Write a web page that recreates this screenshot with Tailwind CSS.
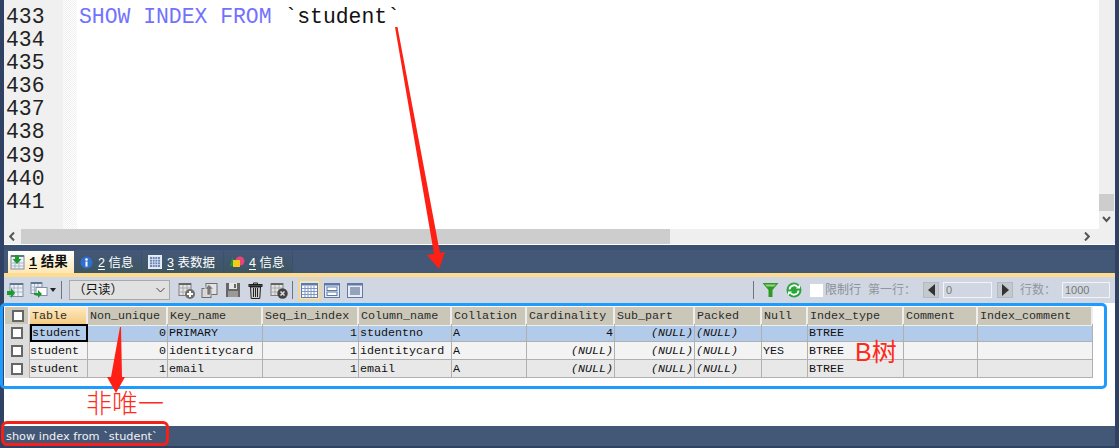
<!DOCTYPE html>
<html>
  <head>
    <meta charset="utf-8" />
    <title>SQLyog</title>
    <script src="https://cdn.jsdelivr.net/npm/@tailwindcss/browser@4"></script>
  </head>
  <body class="relative flex h-[448px] w-[1119px] flex-col overflow-hidden bg-[#2f4264] font-['Liberation_Sans','Noto_Sans_CJK_SC',sans-serif]">
    <!-- editor -->
    <div class="mx-[4px] flex h-[229px] shrink-0 bg-white">
      <div class="w-[59px] shrink-0 bg-[#f0f0f0] pl-[2px] pt-[6px] font-['Liberation_Mono',monospace] text-[21.4px] leading-[23.1px] text-[#222]">
        <div>433</div><div>434</div><div>435</div><div>436</div><div>437</div><div>438</div><div>439</div><div>440</div><div>441</div>
      </div>
      <div class="w-[14px] shrink-0 bg-[repeating-conic-gradient(#f0f0f0_0_25%,#ffffff_0_50%)] bg-[length:2px_2px]"></div>
      <div class="flex-1 pl-[2px] pt-[6px] font-['Liberation_Mono',monospace] text-[21.4px] leading-[23.1px] text-[#111]">
        <span class="text-[#7272ff]">SHOW INDEX FROM</span> `student`
      </div>
      <div class="flex w-[16px] shrink-0 flex-col bg-[#efefef]">
        <div class="mt-[194px] h-[17px] w-[15px] bg-[#cdcdcd]"></div>
        <svg class="mt-[5px] ml-[3px]" width="9" height="7" viewBox="0 0 9 7"><path d="M1 1l3.5 4L8 1" fill="none" stroke="#555" stroke-width="2" /></svg>
      </div>
    </div>
    <div class="mx-[4px] flex h-[15px] shrink-0 items-center bg-[#efefef]">
      <svg class="ml-[5px] mr-[6px]" width="6" height="9" viewBox="0 0 6 9"><path d="M5 .5L1.2 4.5 5 8.5" fill="none" stroke="#555" stroke-width="2" /></svg>
      <div class="h-full w-[649px] bg-[#cdcdcd]"></div>
      <svg class="ml-[414px]" width="6" height="9" viewBox="0 0 6 9"><path d="M1 .5l3.8 4L1 8.5" fill="none" stroke="#555" stroke-width="2" /></svg>
    </div>
    <div class="mx-[4px] h-[1px] shrink-0 bg-white"></div>

    <!-- result tabs -->
    <div class="mx-[4px] flex h-[28px] shrink-0 items-end border-t-[5px] border-b-0 border-[#3a4f72] bg-[#435877] text-[12.5px] text-white">
      <div class="ml-[4px] flex h-[22px] w-[66px] items-center gap-[4px] bg-gradient-to-b from-white to-[#fde6b0] pl-[2px] pt-[2px] text-[13.5px] font-bold text-[#111]">
        <svg class="-mt-[2px]" width="15" height="16" viewBox="0 0 15 16"><rect x="1" y="2" width="13" height="13" fill="#eef1f6" stroke="#7d8fa8" /><path d="M1 2h13" stroke="#5f7796" stroke-width="2" /><path d="M5 6v9M9 6v9M1 9h13M1 12h13" stroke="#a9b6c8" /><path d="M5 1h4v4h2.500L7 10 2.500 5H5z" fill="#1d9a2c" /></svg>
        <span><span class="font-['Liberation_Mono',monospace] underline underline-offset-2">1</span> 结果</span>
      </div>
      <div class="ml-[1px] flex h-[22px] w-[67px] items-center gap-[5px] border-r border-[#3a4f72] bg-gradient-to-b from-[#435877] to-[#3d5660] pl-[5px] pt-[2px]">
        <svg class="-mt-[2px]" width="13" height="13" viewBox="0 0 13 13"><circle cx="6.500" cy="6.500" r="6" fill="#2f6fd0" /><circle cx="6.500" cy="3.500" r="1.300" fill="#fff" /><rect x="5.500" y="5.500" width="2" height="5" fill="#fff" /></svg>
        <span><span class="underline underline-offset-2">2</span> 信息</span>
      </div>
      <div class="flex h-[22px] w-[82px] items-center gap-[5px] border-r border-[#3a4f72] bg-gradient-to-b from-[#435877] to-[#3d5660] pl-[6px] pt-[2px]">
        <svg class="-mt-[2px]" width="14" height="14" viewBox="0 0 14 14"><rect x=".5" y=".5" width="13" height="13" fill="#dfe6f2" stroke="#e8eef8" /><rect x="2" y="2" width="10" height="10" fill="#6d87b8" /><path d="M4.500 2v10M7 2v10M9.500 2v10M2 4.500h10M2 7h10M2 9.500h10" stroke="#dfe6f2" stroke-width=".7" /></svg>
        <span><span class="underline underline-offset-2">3</span> 表数据</span>
      </div>
      <div class="flex h-[22px] w-[69px] items-center gap-[4px] border-r border-[#3a4f72] bg-gradient-to-b from-[#435877] to-[#3d5660] pl-[5px] pt-[2px]">
        <svg class="-mt-[2px]" width="16" height="14" viewBox="0 0 16 14"><path d="M1 11L3.500 2 5 11z" fill="#18a13a" /><circle cx="11" cy="6" r="4.500" fill="#e8447a" /><rect x="4" y="5" width="7" height="7" fill="#f7c91d" /></svg>
        <span><span class="underline underline-offset-2">4</span> 信息</span>
      </div>
    </div>
    <div class="mx-[4px] h-[4px] shrink-0 bg-[#fddc92]"></div>

    <!-- toolbar -->
    <div class="mx-[4px] flex h-[26px] shrink-0 items-center bg-[#d0d7e2] text-[12px] text-[#8a8f98]">
      <svg class="ml-[3px]" width="17" height="17" viewBox="0 0 17 17"><rect x="3" y="1.500" width="13" height="13" fill="#eef1f6" stroke="#7d8fa8" /><path d="M3 2h13" stroke="#5f7796" stroke-width="2" /><path d="M7 3v11M11 3v11M3 6h13M3 10h13" stroke="#a9b6c8" /><path d="M0 9h4V6l4 5-4 5v-3H0z" fill="#1d9a2c" /></svg>
      <svg class="ml-[6px]" width="18" height="18" viewBox="0 0 18 18"><rect x="1" y="1.500" width="11" height="11" fill="#eef1f6" stroke="#7d8fa8" /><path d="M1 2h11" stroke="#5f7796" stroke-width="2" /><path d="M4.500 3v9M8 3v9M1 6h11M1 9h11" stroke="#a9b6c8" /><rect x="6" y="6.500" width="11" height="8" fill="#fff" stroke="#7d8fa8" /><path d="M4 12h4V9l4 4-4 4v-3H4z" fill="#1d9a2c" /></svg>
      <div class="ml-[2px] h-0 w-0 border-x-[3.500px] border-t-[4px] border-x-transparent border-t-[#222]"></div>
      <div class="ml-[5px] h-[18px] w-px bg-[#6c7480]"></div>
      <div class="ml-[7px] flex h-[20px] w-[101px] items-center justify-between border border-[#a9a9a9] bg-[#e1e1e1] pl-[3px] pr-[4px] text-[12.5px] text-[#111]">
        <span>（只读）</span>
        <svg width="9" height="6" viewBox="0 0 9 6"><path d="M.5 1l4 4 4-4" fill="none" stroke="#444" /></svg>
      </div>
      <svg class="ml-[8px]" width="17" height="17" viewBox="0 0 17 17"><rect x="1" y="1.500" width="12" height="12" fill="#e4e4e4" stroke="#7d7d7d" /><path d="M1 2h12" stroke="#666" stroke-width="2" /><path d="M5 3v10M9 3v10M1 6h12M1 10h12" stroke="#aaa" /><circle cx="12" cy="12" r="5" fill="#6e6e6e" /><path d="M12 9v6M9 12h6" stroke="#fff" stroke-width="2" /></svg>
      <svg class="ml-[6px]" width="17" height="17" viewBox="0 0 17 17"><rect x="5" y="1.500" width="11" height="11" fill="#e4e4e4" stroke="#6e6e6e" /><rect x="1" y="6.500" width="9" height="9" fill="#d8d8d8" stroke="#6e6e6e" /><path d="M6 13V7H3.500L8 2.500 12.500 7H10v6z" fill="#777" stroke="#e4e4e4" stroke-width=".7" /></svg>
      <svg class="ml-[7px]" width="16" height="16" viewBox="0 0 16 16"><path d="M1 1h14v14H1z" fill="#666" /><rect x="4" y="1" width="8" height="6" fill="#e6e6e6" /><rect x="9" y="2" width="2" height="4" fill="#666" /><rect x="3" y="9" width="10" height="6" fill="#9a9a9a" /></svg>
      <svg class="ml-[7px]" width="15" height="17" viewBox="0 0 15 17"><path d="M5.500 2V1h4v1" fill="none" stroke="#222" /><rect x="1" y="2.500" width="13" height="2" fill="#444" stroke="#222" /><path d="M2.500 5h10l-.7 11.500H3.200z" fill="#ccc" stroke="#222" /><path d="M5.500 6v9M7.500 6v9M9.500 6v9" stroke="#222" /></svg>
      <svg class="ml-[7px]" width="18" height="17" viewBox="0 0 18 17"><rect x="1" y="1.500" width="12" height="12" fill="#e4e4e4" stroke="#7d7d7d" /><path d="M1 2h12" stroke="#666" stroke-width="2" /><path d="M5 3v10M9 3v10M1 6h12M1 10h12" stroke="#aaa" /><circle cx="12.500" cy="11.500" r="5.200" fill="#444" /><path d="M10.500 9.500l4 4M14.500 9.500l-4 4" stroke="#ddd" stroke-width="1.600" /></svg>
      <div class="ml-[4px] h-[18px] w-px bg-[#6c7480]"></div>
      <div class="ml-[5px] flex h-[22px] w-[23px] items-center justify-center border-2 border-[#f3d58c] bg-[#dfe5ee]">
        <svg width="17" height="15" viewBox="0 0 17 15"><rect x=".5" y=".5" width="16" height="14" fill="#fff" stroke="#5f7aa8" /><path d="M1 1.500h15" stroke="#5f7aa8" stroke-width="2" /><path d="M4 3v11M7 3v11M10 3v11M13 3v11M1 5.500h15M1 8.500h15M1 11.500h15" stroke="#7f96c0" /></svg>
      </div>
      <svg class="ml-[3px]" width="16" height="15" viewBox="0 0 16 15"><rect x=".5" y=".5" width="15" height="14" fill="#e8edf5" stroke="#5f7aa8" /><path d="M1 1.500h14" stroke="#5f7aa8" stroke-width="2" /><rect x="3" y="4" width="10" height="3.500" fill="#fff" stroke="#5f7aa8" /><rect x="3" y="9" width="10" height="3.500" fill="#fff" stroke="#5f7aa8" /></svg>
      <svg class="ml-[7px]" width="16" height="15" viewBox="0 0 16 15"><rect x=".5" y=".5" width="15" height="14" fill="#e8edf5" stroke="#5f7aa8" /><path d="M1 1.500h14" stroke="#5f7aa8" stroke-width="2" /><path d="M3 5h10M3 7h10M3 9h10M3 11h10" stroke="#44597f" /></svg>
      <div class="ml-[390px] h-[18px] w-px bg-[#6c7480]"></div>
      <svg class="ml-[8px]" width="17" height="16" viewBox="0 0 17 16"><path d="M.5 1h16l-6 7v7h-4V8z" fill="#2d9a22" /><path d="M3 2.500h11l-2 2H5z" fill="#9ad48a" /></svg>
      <svg class="ml-[7px]" width="16" height="16" viewBox="0 0 16 16"><circle cx="8" cy="8" r="7.500" fill="#2aa53a" /><path d="M3.500 7.500A4.500 4.500 0 0 1 11.500 5M12.500 8.500A4.500 4.500 0 0 1 4.500 11" fill="none" stroke="#fff" stroke-width="1.800" /><path d="M10 6.500h4v-4zM6 9.500H2v4z" fill="#fff" /></svg>
      <div class="ml-[8px] h-[13px] w-[13px] bg-white"></div>
      <span class="ml-[2px] w-[43px]">限制行</span>
      <span class="w-[55px] text-[#9096a0]">第一行：</span>
      <div class="flex h-[16px] w-[16px] items-center justify-center border border-[#b5b9c0] bg-[#c4c8cf]"><div class="h-0 w-0 border-y-[6px] border-r-[7px] border-y-transparent border-r-[#333]"></div></div>
      <div class="ml-[4px] flex h-[16px] w-[49px] items-center border border-[#f2f4f7] bg-[#d0d7e2] pl-[2px] text-[11px] text-[#777]">0</div>
      <div class="ml-[5px] flex h-[16px] w-[16px] items-center justify-center border border-[#b5b9c0] bg-[#c4c8cf]"><div class="h-0 w-0 border-y-[6px] border-l-[7px] border-y-transparent border-l-[#333]"></div></div>
      <span class="ml-[7px] w-[42px] text-[#9096a0]">行数：</span>
      <div class="flex h-[16px] w-[48px] items-center border border-[#f2f4f7] bg-[#d0d7e2] pl-[2px] text-[11px] text-[#777]">1000</div>
    </div>

    <!-- result grid -->
    <div class="mx-[4px] flex-1 bg-white pl-[1px] pt-[4px] font-['Liberation_Mono',monospace] text-[11.7px] leading-[17px] text-[#111]">
      <div class="grid h-[17px] w-[1088px] grid-cols-[25px_58px_80px_95px_96px_93px_75px_88px_80px_67px_46px_96px_74px_115px] *:border-r-2 *:border-b *:border-[#eeeeee] *:bg-[#cbc7b8] *:pl-[2px] *:pt-px *:text-[#2b2b2b]">
        <div class="flex items-center justify-center pt-0!"><div class="h-[12px] w-[12px] border-2 border-[#666] bg-white"></div></div>
        <div class="bg-gradient-to-b! from-[#fdeac0] to-[#f5c87c] pl-[1px]">Table</div><div>Non_unique</div><div>Key_name</div><div>Seq_in_index</div><div>Column_name</div><div>Collation</div><div>Cardinality</div><div>Sub_part</div><div>Packed</div><div>Null</div><div>Index_type</div><div>Comment</div><div>Index_comment</div>
      </div>
      <div class="grid h-[18px] w-[1088px] grid-cols-[25px_58px_80px_95px_96px_93px_75px_88px_80px_67px_46px_96px_74px_115px] border-b border-[#b0b0b0] bg-[#b3cbea] *:border-r *:border-[#b0b0b0] *:px-[1px] *:pt-px">
        <div class="flex items-center justify-center bg-[#dcdcdc] pt-0!"><div class="h-[12px] w-[12px] border-2 border-[#666] bg-white"></div></div>
        <div class="border-2! border-black! pl-0! pt-0! leading-[14px]">student</div><div class="text-right">0</div><div>PRIMARY</div><div class="text-right">1</div><div>studentno</div><div>A</div><div class="text-right">4</div><div class="text-right italic">(NULL)</div><div class="italic">(NULL)</div><div></div><div>BTREE</div><div></div><div></div>
      </div>
      <div class="grid h-[18px] w-[1088px] grid-cols-[25px_58px_80px_95px_96px_93px_75px_88px_80px_67px_46px_96px_74px_115px] border-b border-[#b0b0b0] bg-[#f3f3f3] *:border-r *:border-[#b0b0b0] *:px-[1px] *:pt-px">
        <div class="flex items-center justify-center bg-[#dcdcdc] pt-0!"><div class="h-[12px] w-[12px] border-2 border-[#666] bg-white"></div></div>
        <div class="pl-0!">student</div><div class="text-right">0</div><div>identitycard</div><div class="text-right">1</div><div>identitycard</div><div>A</div><div class="text-right italic">(NULL)</div><div class="text-right italic">(NULL)</div><div class="italic">(NULL)</div><div>YES</div><div>BTREE</div><div></div><div></div>
      </div>
      <div class="grid h-[18px] w-[1088px] grid-cols-[25px_58px_80px_95px_96px_93px_75px_88px_80px_67px_46px_96px_74px_115px] border-b border-[#b0b0b0] bg-[#e8e8e8] *:border-r *:border-[#b0b0b0] *:px-[1px] *:pt-px">
        <div class="flex items-center justify-center bg-[#dcdcdc] pt-0!"><div class="h-[12px] w-[12px] border-2 border-[#666] bg-white"></div></div>
        <div class="pl-0!">student</div><div class="text-right">1</div><div>email</div><div class="text-right">1</div><div>email</div><div>A</div><div class="text-right italic">(NULL)</div><div class="text-right italic">(NULL)</div><div class="italic">(NULL)</div><div></div><div>BTREE</div><div></div><div></div>
      </div>
    </div>

    <!-- status bar -->
    <div class="mx-[4px] flex h-[20px] shrink-0 items-center bg-[#435877] pl-[2px] pt-[3px] font-['DejaVu_Sans',sans-serif] text-[11.3px] text-[#f2f2f2]">show index from `student`</div>
    <div class="h-[2px] shrink-0"></div>

    <!-- annotations drawn on top of the screenshot -->
    <div class="absolute left-0 top-[303px] h-[86px] w-[1107px] rounded-[5px] border-[3px] border-[#1e9bfd]"></div>
    <div class="absolute left-[1px] top-[421px] h-[25px] w-[168px] rounded-[6px] border-[3px] border-[#f5201a]"></div>
    <div class="absolute left-[855px] top-[337px] text-[25px] leading-[30px] text-[#ff2a1a]">B树</div>
    <div class="absolute left-[86px] top-[389px] text-[26px] leading-[30px] font-light text-[#ff2a1a]">非唯一</div>
    <svg class="absolute left-0 top-0" width="1119" height="448" viewBox="0 0 1119 448">
      <path d="M395 27h2.500L440 253l5-1-6 17-12-14 7-1z" fill="#ff2015" />
      <path d="M120 327h1l1 50h3l-9 16-9-16h4z" fill="#ff2015" />
    </svg>
  </body>
</html>
